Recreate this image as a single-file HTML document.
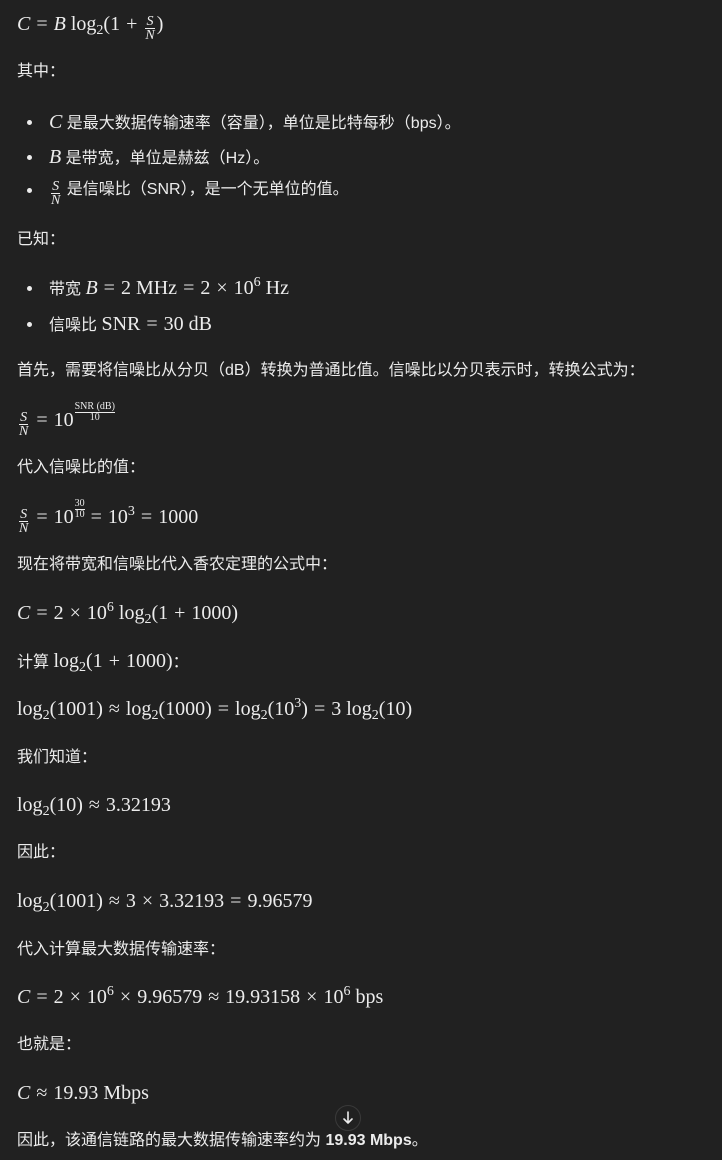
<!DOCTYPE html>
<html><head><meta charset="utf-8"><style>
body{margin:0;background:#212121;width:722px;height:1160px;overflow:hidden;position:relative;color:#ececec;font-family:"Liberation Sans","Noto Sans CJK SC",sans-serif;font-size:16px}
.l{position:absolute;left:17px;height:24px;line-height:24px;white-space:nowrap}
.b{left:49px}
.b::before{content:"";position:absolute;left:-22px;top:10px;width:5px;height:5px;border-radius:50%;background:#ececec}
.m{font-family:"Liberation Serif","DejaVu Serif",serif;font-size:20px}
i{font-family:"Liberation Serif",serif;font-style:italic;font-size:20px}
o{display:inline-block;margin:0 6px}
.fr{display:inline-block;position:relative;top:3px;text-align:center;font-size:13px;line-height:12px;height:24px;vertical-align:top;font-family:"Liberation Serif",serif;margin:0 2px}
.fr span{display:block}
.fr i{font-size:14px}
.fr .t{border-bottom:1px solid #ececec;padding:0 1px}
sub{font-size:14px;position:relative;top:4px;vertical-align:baseline;line-height:0}
sup{font-size:14px;position:relative;top:-8px;vertical-align:baseline;line-height:0}
.sf{display:inline-block;position:relative;top:-6px;font-size:10px;line-height:10px;height:24px;text-align:center;vertical-align:top;margin-left:1px}
.sf span{display:block}.sf .t{border-bottom:1px solid #ececec}
</style></head><body>
<div class="l m" style="top:12px"><i>C</i><o>=</o><i>B</i> log<sub>2</sub>(1<o>+</o><span class="fr"><span class="t"><i>S</i></span><span><i>N</i></span></span>)</div>
<div class="l" style="top:60px">其中：</div>
<div class="l b" style="top:110px"><i>C</i> 是最大数据传输速率（容量），单位是比特每秒（bps）。</div>
<div class="l b" style="top:145px"><i>B</i> 是带宽，单位是赫兹（Hz）。</div>
<div class="l b" style="top:178px"><span class="fr" style="top:2px"><span class="t"><i>S</i></span><span><i>N</i></span></span> 是信噪比（SNR），是一个无单位的值。</div>
<div class="l" style="top:228px">已知：</div>
<div class="l b" style="top:276px">带宽 <span class="m"><i>B</i><o>=</o>2 MHz<o>=</o>2<o>×</o>10<sup>6</sup> Hz</span></div>
<div class="l b" style="top:312px">信噪比 <span class="m">SNR<o>=</o>30 dB</span></div>
<div class="l" style="top:359px">首先，需要将信噪比从分贝（dB）转换为普通比值。信噪比以分贝表示时，转换公式为：</div>
<div class="l m" style="top:408px"><span class="fr"><span class="t"><i>S</i></span><span><i>N</i></span></span><o>=</o>10<span class="sf"><span class="t">SNR (dB)</span><span>10</span></span></div>
<div class="l" style="top:456px">代入信噪比的值：</div>
<div class="l m" style="top:505px"><span class="fr"><span class="t"><i>S</i></span><span><i>N</i></span></span><o>=</o>10<span class="sf"><span class="t">30</span><span>10</span></span><o>=</o>10<sup>3</sup><o>=</o>1000</div>
<div class="l" style="top:553px">现在将带宽和信噪比代入香农定理的公式中：</div>
<div class="l m" style="top:601px"><i>C</i><o>=</o>2<o>×</o>10<sup>6</sup> log<sub>2</sub>(1<o>+</o>1000)</div>
<div class="l" style="top:649px">计算 <span class="m">log<sub>2</sub>(1<o>+</o>1000)</span>：</div>
<div class="l m" style="top:697px">log<sub>2</sub>(1001)<o>≈</o>log<sub>2</sub>(1000)<o>=</o>log<sub>2</sub>(10<sup>3</sup>)<o>=</o>3 log<sub>2</sub>(10)</div>
<div class="l" style="top:746px">我们知道：</div>
<div class="l m" style="top:793px">log<sub>2</sub>(10)<o>≈</o>3.32193</div>
<div class="l" style="top:841px">因此：</div>
<div class="l m" style="top:889px">log<sub>2</sub>(1001)<o>≈</o>3<o>×</o>3.32193<o>=</o>9.96579</div>
<div class="l" style="top:938px">代入计算最大数据传输速率：</div>
<div class="l m" style="top:985px"><i>C</i><o>=</o>2<o>×</o>10<sup>6</sup><o>×</o>9.96579<o>≈</o>19.93158<o>×</o>10<sup>6</sup> bps</div>
<div class="l" style="top:1033px">也就是：</div>
<div class="l m" style="top:1081px"><i>C</i><o>≈</o>19.93 Mbps</div>
<div class="l" style="top:1129px">因此，该通信链路的最大数据传输速率约为 <b>19.93 Mbps</b>。</div>
<div style="position:absolute;left:335px;top:1105px;width:26px;height:26px;border-radius:50%;border:1px solid #3a3a3a;background:#212121;box-sizing:border-box">
<svg width="24" height="24" viewBox="0 0 24 24" style="position:absolute;left:0;top:0"><path d="M12 6v11M8 13l4 4 4-4" stroke="#ececec" stroke-width="1.6" fill="none" stroke-linecap="round" stroke-linejoin="round"/></svg></div>
</body></html>
